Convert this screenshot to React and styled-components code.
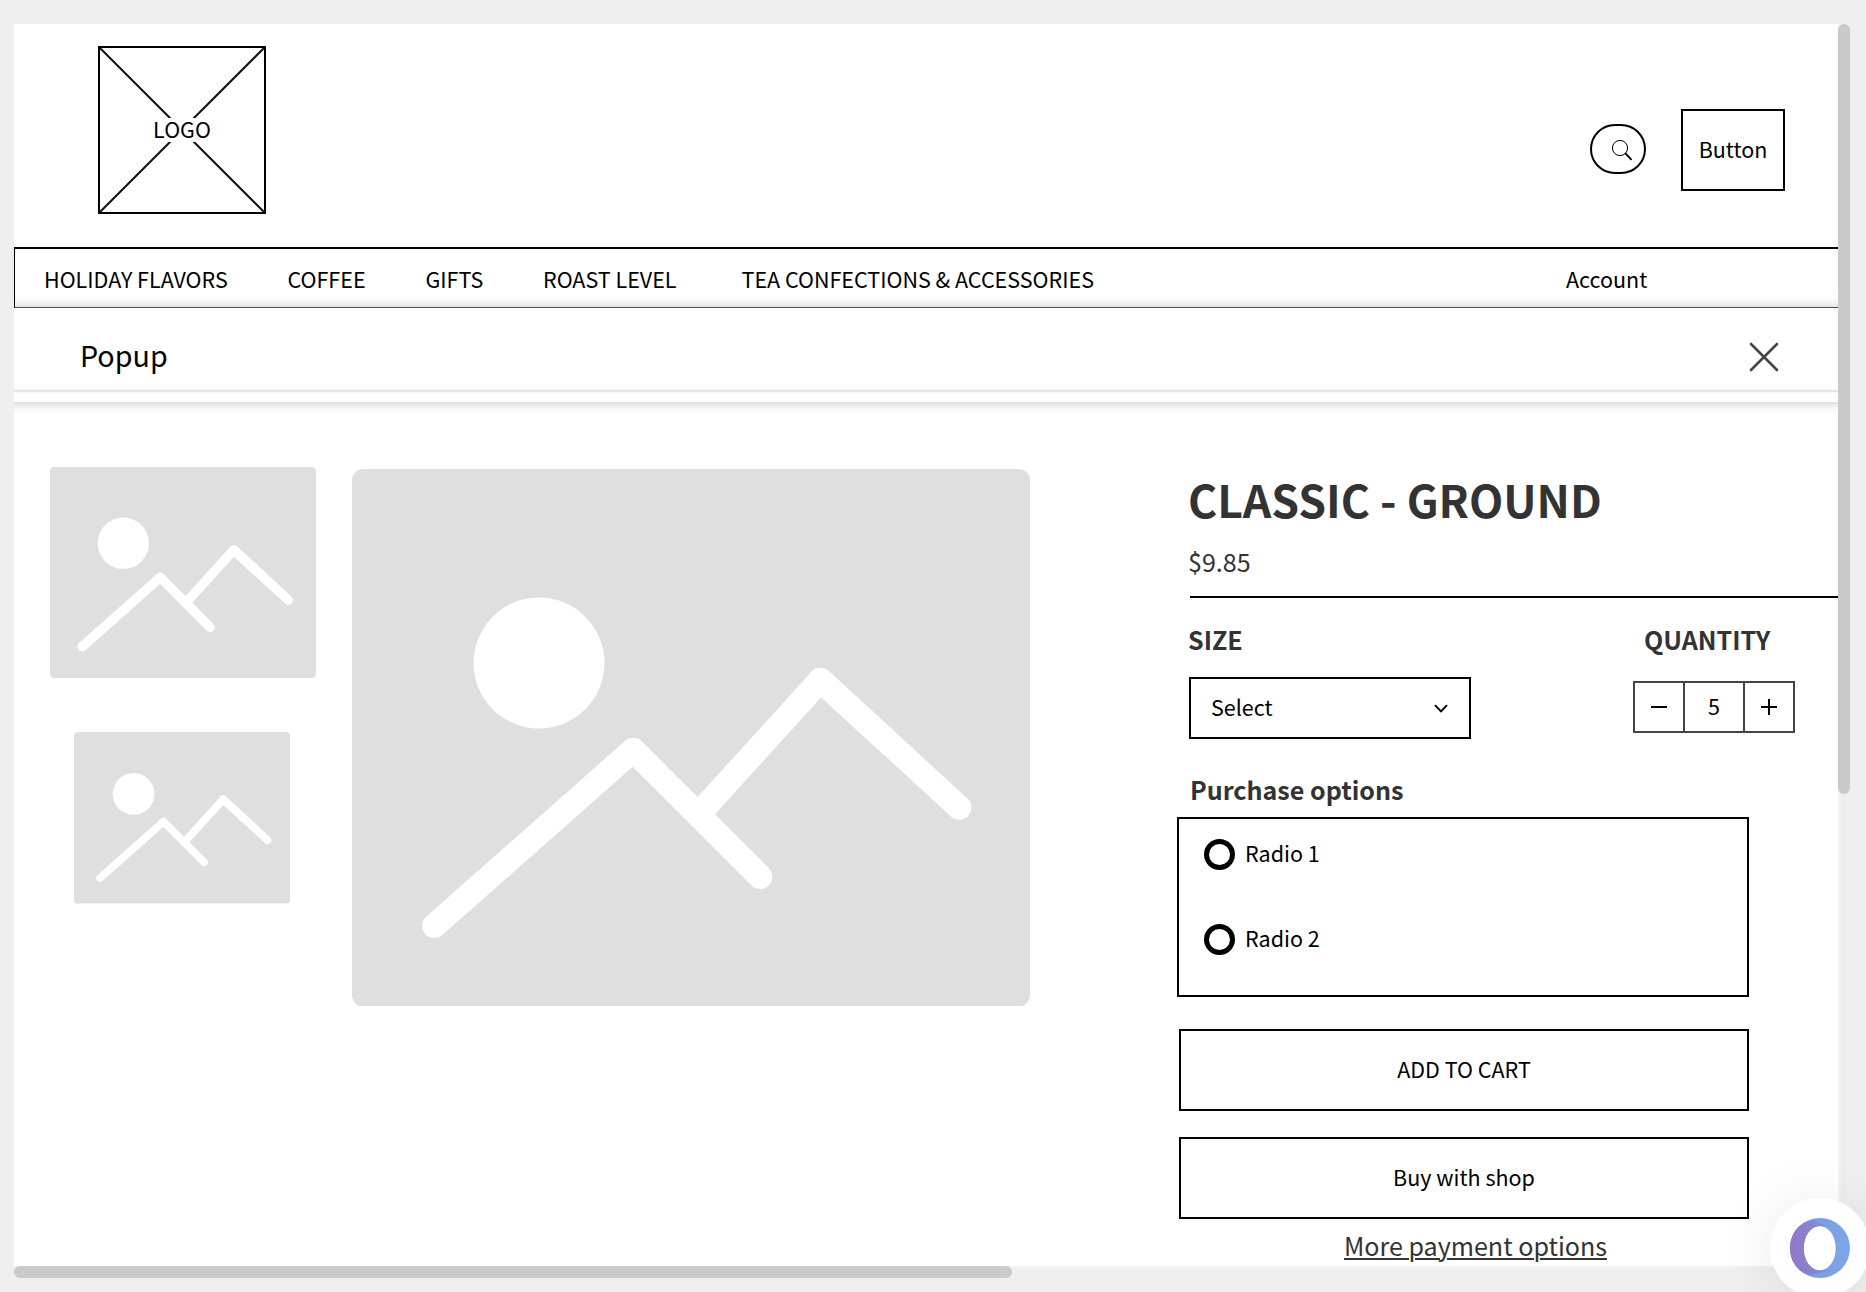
import React from "react";
import styled, { createGlobalStyle } from "styled-components";

const GlobalStyle = createGlobalStyle`
  * { box-sizing: border-box; }
  html, body { margin: 0; padding: 0; }
  body {
    background: #efefef;
    color: #000;
    font-family: "Noto Sans CJK SC", "Noto Sans", sans-serif;
    font-size: 21.5px;
    line-height: 32px;
    overflow: hidden;
  }
  button { font: inherit; color: inherit; background: none; padding: 0; margin: 0; }
`;

const Screen = styled.div`
  position: relative;
  width: 1866px;
  height: 1292px;
  padding: 24px 16px 14px 14px;
  background: #efefef;
  overflow: hidden;
`;

const Scroller = styled.div`
  display: grid;
  grid-template-columns: 1824px 12px;
  grid-template-rows: 1242px 12px;
`;

const Page = styled.main`
  display: flex;
  flex-direction: column;
  background: #fff;
  overflow: hidden;
`;

const Track = styled.div`
  background: ${(p) => (p.$vertical ? "linear-gradient(90deg, #f5f5f5, #ededed 35%, #f1f1f1)" : "linear-gradient(#f5f5f5, #ededed 35%, #f1f1f1)")};
`;

const Thumb = styled.div`
  width: ${(p) => p.$w}px;
  height: ${(p) => p.$h}px;
  border-radius: 6px;
  background: #cacaca;
`;

const Corner = styled.div`
  background: #fbfbfb;
`;

const Header = styled.header`
  display: flex;
  align-items: flex-start;
  height: 223px;
  padding: 22px 53px 0 84px;
`;

const LogoBox = styled.div`
  display: grid;
  place-items: center;
  width: 168px;
  height: 168px;
  border: 2px solid #000;
  > * { grid-area: 1 / 1; }
`;

const LogoText = styled.span`
  height: 24px;
  line-height: 22px;
  padding: 0 3px;
  background: #fff;
`;

const SearchPill = styled.button`
  display: flex;
  align-items: center;
  justify-content: flex-end;
  width: 56px;
  height: 50px;
  margin: 78px 35px 0 auto;
  padding: 2px 11px 0 0;
  border: 2px solid #000;
  border-radius: 25px;
`;

const OutlineButton = styled.button`
  width: ${(p) => p.$w}px;
  height: 82px;
  margin-top: ${(p) => p.$top}px;
  margin-left: ${(p) => p.$left || 0}px;
  padding-bottom: 2px;
  border: 2px solid #000;
  text-align: center;
`;

const Nav = styled.nav`
  display: flex;
  align-items: center;
  height: 61px;
  padding: 1px 0 0 29px;
  border: solid #000;
  border-width: 2px 0 1px 1px;
  border-bottom-color: #5a5a5a;
  flex: none;
`;

const NavItem = styled.a`
  width: ${(p) => p.$w}px;
  white-space: nowrap;
`;

const PopupBar = styled.section`
  position: relative;
  flex: none;
  height: 94px;
  margin: 0 -20px;
  background: #fff;
  box-shadow: 0 0 12px rgba(0, 0, 0, 0.25);
`;

const PopupHead = styled.div`
  display: flex;
  align-items: center;
  justify-content: space-between;
  height: 84px;
  padding: 15px 79px 0 86px;
  border-bottom: 2px solid #e6e6e6;
  box-shadow: 0 1px #f6f6f6, inset 0 -1px #f6f6f6;
  font-size: 28.66px;
`;

const PopupTitle = styled.span`
  margin-top: -3px;
`;

const Product = styled.section`
  display: flex;
  align-items: flex-start;
  flex: 1;
  padding-left: 36px;
`;

const ThumbColumn = styled.div`
  display: flex;
  flex-direction: column;
  gap: 54.3px;
  width: 266px;
  padding-top: 64.6px;
  margin-right: 36px;
  svg { display: block; }
  svg + svg { margin-left: 24px; }
`;

const MainPicture = styled.div`
  margin: 66.6px 147px 0 0;
  svg { display: block; }
`;

const Details = styled.div`
  display: flex;
  flex-direction: column;
  align-items: flex-start;
  width: 661px;
  padding-top: 66.5px;
`;

const Title = styled.h1`
  margin: 0 0 14.5px 11px;
  font-size: 44.55px;
  font-weight: 700;
  line-height: 60px;
  color: #333;
`;

const Price = styled.div`
  margin: 0 0 17px 11px;
  font-size: 25.07px;
  line-height: 36px;
  color: #333;
`;

const Rule = styled.hr`
  width: 648px;
  height: 2px;
  margin: 0 0 23px 13px;
  border: 0;
  background: #000;
`;

const Label = styled.h2`
  margin: 0 0 0 ${(p) => p.$indent || 0}px;
  font-size: 25.07px;
  font-weight: 700;
  line-height: 36px;
  color: #333;
`;

const Choices = styled.div`
  display: flex;
  gap: 162px;
  margin: 0 0 32.4px 12px;
`;

const Field = styled.div`
  display: flex;
  flex-direction: column;
  gap: ${(p) => p.$gap}px;
`;

const SelectBox = styled.button`
  display: flex;
  align-items: center;
  justify-content: space-between;
  width: 282px;
  height: 62px;
  padding: 0 21px 2px 20px;
  border: 2px solid #000;
  svg { margin-top: 3px; }
`;

const Stepper = styled.div`
  display: grid;
  grid-template-columns: 48px 58px 48px;
  gap: 2px;
  width: 162px;
  height: 52px;
  border: 2px solid #444;
  background: #444;
  > * {
    display: flex;
    align-items: center;
    justify-content: center;
    border: 0;
    background: #fff;
  }
  > span { padding-bottom: 2px; }
`;

const RadioPanel = styled.div`
  display: flex;
  flex-direction: column;
  gap: 53px;
  width: 572px;
  height: 180px;
  margin-top: 9.6px;
  padding: 20px 0 0 25px;
  border: 2px solid #000;
`;

const RadioRow = styled.label`
  display: flex;
  align-items: center;
  gap: 10px;
  height: 32px;
`;

const RadioRing = styled.span`
  width: 31px;
  height: 31px;
  border: 5px solid #000;
  border-radius: 50%;
`;

const RadioText = styled.span`
  margin-top: -4px;
`;

const MoreLink = styled.a`
  width: 572px;
  margin: 11px 0 0 12.5px;
  font-size: 25.07px;
  line-height: 30px;
  text-align: center;
  color: #333;
  text-decoration: underline;
  text-decoration-thickness: 2px;
  text-underline-offset: 2px;
`;

const Assistant = styled.button`
  position: absolute;
  left: 1770px;
  top: 1198px;
  display: flex;
  align-items: center;
  justify-content: center;
  width: 100px;
  height: 100px;
  border: 0;
  border-radius: 50%;
  background: rgba(255, 255, 255, 0.88);
  box-shadow: 0 4px 60px rgba(0, 0, 0, 0.09);
`;

function Placeholder({ width, height }) {
  return (
    <svg width={width} height={height} viewBox="0 0 678 537.6" preserveAspectRatio="none">
      <rect width="678" height="537.6" rx="11.5" fill="#dfdfdf" />
      <circle cx="187" cy="194" r="65.5" fill="#fff" />
      <g fill="none" stroke="#fff" strokeWidth="24.4" strokeLinejoin="round">
        <path strokeLinecap="round" d="M82.2 456.9L281.2 281L408.2 407.8" />
        <path d="M353.500 337.500L468.4 211L540 276.700" />
        <path strokeLinecap="round" d="M468.4 211L607.3 338.5" />
      </g>
    </svg>
  );
}

const NAV = [
  ["HOLIDAY FLAVORS", 243.5],
  ["COFFEE", 138],
  ["GIFTS", 117.5],
  ["ROAST LEVEL", 198.5],
  ["TEA CONFECTIONS & ACCESSORIES", 824.5],
  ["Account", 100],
];

export default function App() {
  return (
    <Screen>
      <GlobalStyle />
      <Scroller>
        <Page>
          <Header>
            <LogoBox>
              <svg width="164" height="164">
                <path d="M0 0L164 164M164 0L0 164" stroke="#111" strokeWidth="2" />
              </svg>
              <LogoText>LOGO</LogoText>
            </LogoBox>
            <SearchPill aria-label="Search">
              <svg width="22" height="22" fill="none" stroke="#000">
                <circle cx="9" cy="9" r="7.6" strokeWidth="1" />
                <path d="M14.2 14.2L20.6 20.8" strokeWidth="1.9" />
              </svg>
            </SearchPill>
            <OutlineButton $w={104} $top={63}>Button</OutlineButton>
          </Header>
          <Nav>
            {NAV.map(([text, w]) => (
              <NavItem key={text} $w={w}>{text}</NavItem>
            ))}
          </Nav>
          <PopupBar>
            <PopupHead>
              <PopupTitle>Popup</PopupTitle>
              <svg width="30" height="30" stroke="#444547" strokeWidth="2.6" strokeLinecap="round">
                <path d="M2 2L28 28M28 2L2 28" />
              </svg>
            </PopupHead>
          </PopupBar>
          <Product>
            <ThumbColumn>
              <Placeholder width={266} height={211.3} />
              <Placeholder width={216} height={171.6} />
            </ThumbColumn>
            <MainPicture>
              <Placeholder width={678} height={537.6} />
            </MainPicture>
            <Details>
              <Title>CLASSIC - GROUND</Title>
              <Price>$9.85</Price>
              <Rule />
              <Choices>
                <Field $gap={20}>
                  <Label $indent={-1}>SIZE</Label>
                  <SelectBox>
                    <span>Select</span>
                    <svg width="14" height="9" fill="none" stroke="#000" strokeWidth="1.9">
                      <path d="M1 1.2L7 7.400L13 1.2" />
                    </svg>
                  </SelectBox>
                </Field>
                <Field $gap={24}>
                  <Label $indent={11}>QUANTITY</Label>
                  <Stepper>
                    <button aria-label="Decrease">
                      <svg width="16" height="16" stroke="#000" strokeWidth="2">
                        <path d="M0 8H16" />
                      </svg>
                    </button>
                    <span>5</span>
                    <button aria-label="Increase">
                      <svg width="16" height="16" stroke="#000" strokeWidth="2">
                        <path d="M0 8H16M8 0V16" />
                      </svg>
                    </button>
                  </Stepper>
                </Field>
              </Choices>
              <Label $indent={13}>Purchase options</Label>
              <RadioPanel>
                <RadioRow><RadioRing /><RadioText>Radio 1</RadioText></RadioRow>
                <RadioRow><RadioRing /><RadioText>Radio 2</RadioText></RadioRow>
              </RadioPanel>
              <OutlineButton $w={570} $top={32} $left={2}>ADD TO CART</OutlineButton>
              <OutlineButton $w={570} $top={26} $left={2}>Buy with shop</OutlineButton>
              <MoreLink>More payment options</MoreLink>
            </Details>
          </Product>
        </Page>
        <Track $vertical><Thumb $w={12} $h={770} /></Track>
        <Track><Thumb $w={998} $h={12} /></Track>
        <Corner />
      </Scroller>
      <Assistant aria-label="Assistant">
        <svg width="60" height="60" viewBox="0 0 60 60">
          <defs>
            <linearGradient id="ring" x1="0" y1="0" x2="1" y2="0">
              <stop offset="0" stopColor="#7c92da" />
              <stop offset="1" stopColor="#7ba8ea" />
            </linearGradient>
            <linearGradient id="crescent" x1="0" y1="0" x2="1" y2="0">
              <stop offset="0" stopColor="#9277c6" />
              <stop offset="1" stopColor="#7b8fdb" />
            </linearGradient>
          </defs>
          <path fill="url(#ring)" fillRule="evenodd" d="M30 0a30 30 0 1 0 0 60a30 30 0 1 0 0-60zM29.7 8a16 22.2 0 1 1 0 44.4a16 22.2 0 1 1 0-44.4z" />
          <path fill="url(#crescent)" d="M15 4.2C5 9.500 0 19 0 30s5 20.500 15 25.800C23 57.500 31 56 37 50.500C34.800 51.800 32.300 52.400 29.700 52.400a16 22.200 0 1 1 0-44.400C32.300 8 34.800 8.600 37 9.900C31 4 23 2.500 15 4.200z" />
        </svg>
      </Assistant>
    </Screen>
  );
}
